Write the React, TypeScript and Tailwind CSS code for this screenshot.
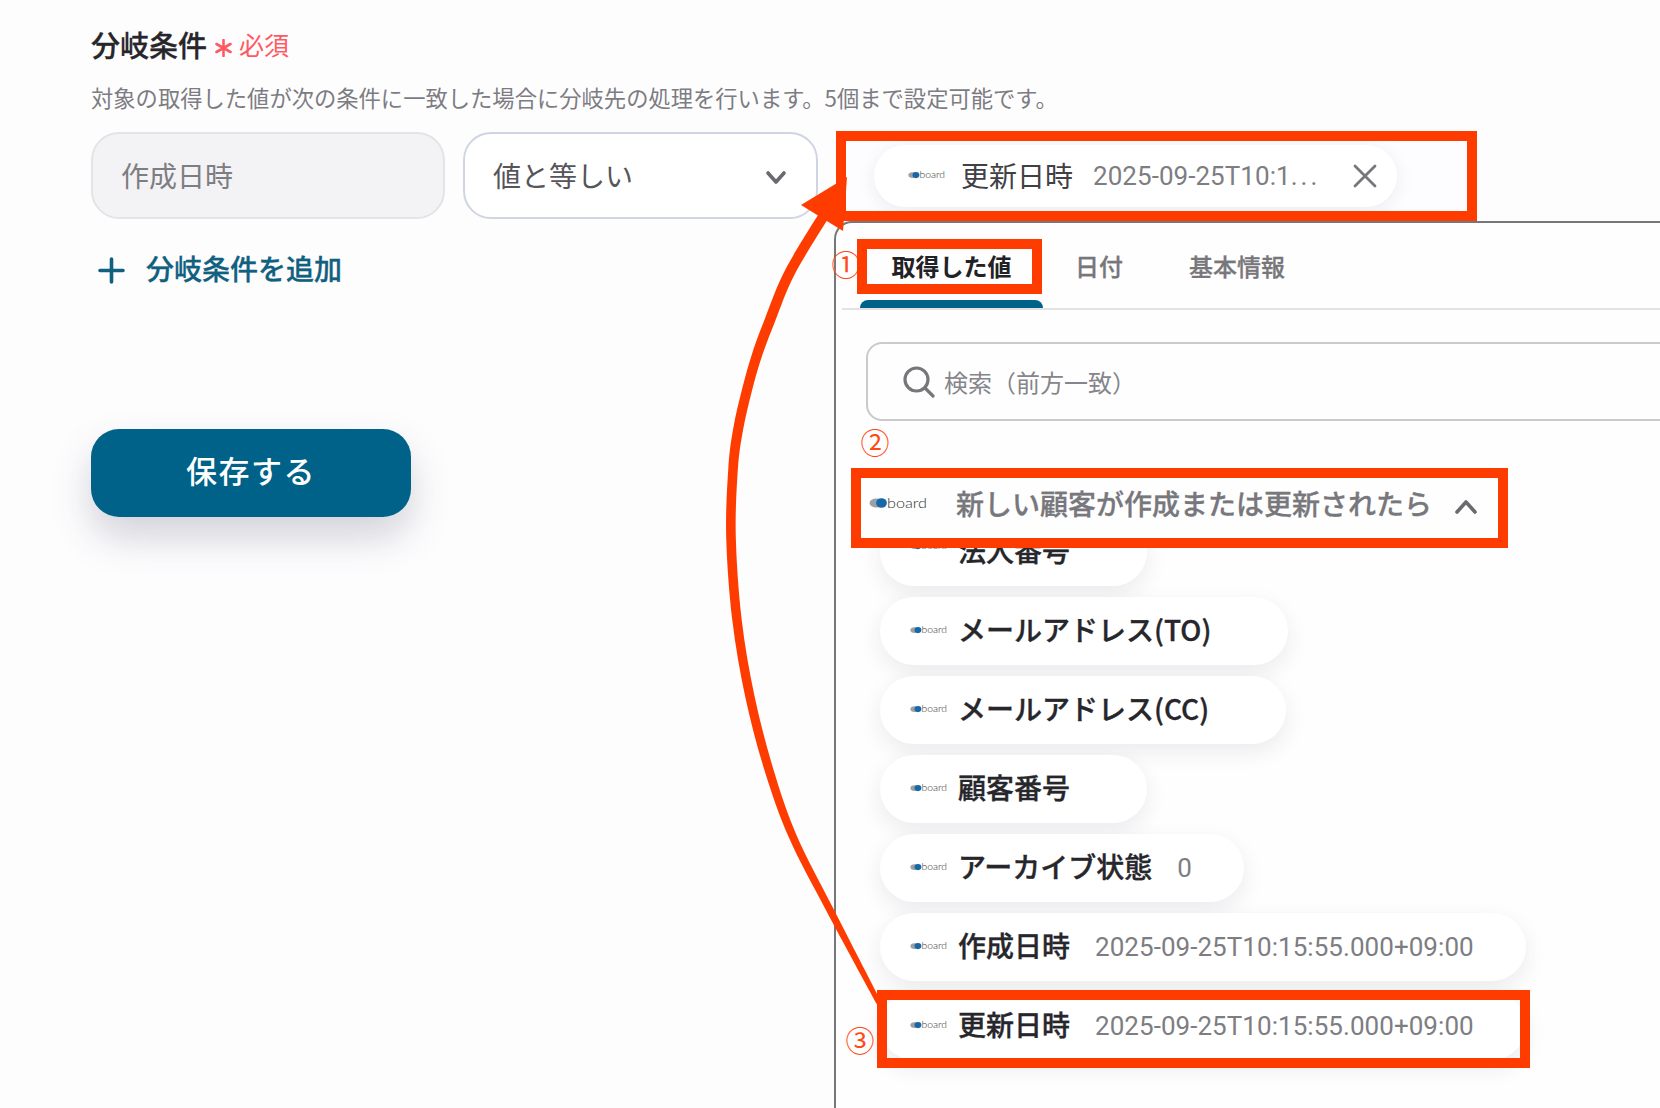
import React from "react";

const ORANGE = "#ff3c00";

function Logo({ w = 37 }: { w?: number }) {
  return (
    <svg width={w} height={(w * 16) / 58} viewBox="0 0 58 16" className="shrink-0">
      <ellipse cx="7.5" cy="8" rx="7" ry="4.6" fill="#9aa0a6" />
      <ellipse cx="12.5" cy="8" rx="5.4" ry="4.8" fill="#1668a8" />
      <text x="18" y="12.5" fontFamily="Lato, sans-serif" fontWeight="300" fontSize="14.5" fill="#333" textLength="40" lengthAdjust="spacingAndGlyphs">
        board
      </text>
    </svg>
  );
}

function Pill({ label, value, clipped }: { label: string; value?: string; clipped?: boolean }) {
  return (
    <div className="flex h-[68px] w-fit shrink-0 items-center rounded-[34px] bg-white pl-[30px] pr-[52px] shadow-[0_8px_22px_rgba(40,40,80,0.09)]">
      <div className={clipped ? "mb-[12px]" : "mb-[2px]"}>
        <Logo />
      </div>
      <span className="ml-[11px] pb-[4px] text-[28px] leading-none font-medium text-[#26262b] [-webkit-text-stroke:0.35px_#26262b]">{label}</span>
      <span className="ml-[25px] font-['Roboto','Noto_Sans',sans-serif] text-[26px] leading-none tracking-[0.05px] text-[#7d7d82]">{value}</span>
    </div>
  );
}

function ArrowCurve() {
  const pts: [number, number, number][] = [
    [879, 1003, 2.5],
    [830, 910, 3.6],
    [793, 837, 4],
    [769, 770, 4.4],
    [750, 697, 4.6],
    [737, 620, 4.7],
    [731, 537, 4.8],
    [733, 470, 4.8],
    [738, 430, 5],
    [747, 390, 5],
    [757, 355, 5.1],
    [770, 320, 5.2],
    [790, 272, 5.2],
    [826, 212, 5.2],
  ];
  const offset = (sign: number) =>
    pts.map((p, i) => {
      const a = pts[Math.max(i - 1, 0)];
      const b = pts[Math.min(i + 1, pts.length - 1)];
      const dx = b[0] - a[0];
      const dy = b[1] - a[1];
      const l = Math.hypot(dx, dy);
      return [p[0] + (sign * p[2] * -dy) / l, p[1] + (sign * p[2] * dx) / l];
    });
  const spline = (q: number[][]) => {
    let d = "";
    for (let i = 0; i < q.length - 1; i++) {
      const p0 = q[Math.max(i - 1, 0)];
      const p1 = q[i];
      const p2 = q[i + 1];
      const p3 = q[Math.min(i + 2, q.length - 1)];
      d += ` C ${p1[0] + (p2[0] - p0[0]) / 6} ${p1[1] + (p2[1] - p0[1]) / 6} ${p2[0] - (p3[0] - p1[0]) / 6} ${p2[1] - (p3[1] - p1[1]) / 6} ${p2[0]} ${p2[1]}`;
    }
    return d;
  };
  const left = offset(1);
  const right = offset(-1).reverse();
  const d = `M ${left[0][0]} ${left[0][1]}${spline(left)} L ${right[0][0]} ${right[0][1]}${spline(right)} Z`;
  return (
    <svg className="pointer-events-none absolute left-0 top-0" width="1660" height="1108" viewBox="0 0 1660 1108">
      <path d={d} fill={ORANGE} />
      <polygon points="801,205 847,177 843,231" fill={ORANGE} />
    </svg>
  );
}

function Tag({ className, children }: { className: string; children: string }) {
  return (
    <span className={`absolute flex items-center justify-center text-[29px] leading-none font-normal text-[#ff4a14] ${className}`}>
      {children}
    </span>
  );
}

export default function App() {
  return (
    <div className="relative h-[1108px] w-[1660px] overflow-hidden bg-[#fefdfe] font-['Noto_Sans_CJK_JP','Noto_Sans',sans-serif]">
      {/* header */}
      <div className="pl-[91px] pt-[26px]">
        <div className="flex h-[40px] items-center pb-[4px]">
          <span className="text-[29px] leading-none font-medium text-[#26262b] [-webkit-text-stroke:0.3px_#26262b]">分岐条件</span>
          <svg width="17" height="18" viewBox="0 0 17 18" className="ml-[8px] mt-[8px]" fill="none" stroke="#ff5a64" strokeWidth="2.6" strokeLinecap="round">
            <path d="M8.5 1 V17 M1.5 5 L15.5 13 M15.5 5 L1.5 13" />
          </svg>
          <span className="ml-[7px] text-[25px] leading-none text-[#ff5a64]">必須</span>
        </div>
        <p className="mt-[15px] mb-[19px] h-[32px] text-[22.3px] leading-[32px] text-[#7c7c82]">
          対象の取得した値が次の条件に一致した場合に分岐先の処理を行います。5個まで設定可能です。
        </p>
        {/* condition fields */}
        <div className="flex h-[87px] gap-[18px]">
          <div className="flex w-[354px] items-center rounded-[28px] border-2 border-[#e4e4e8] bg-[#f3f2f5] pb-[2px] pl-[28px] text-[28px] text-[#7d7d82]">
            作成日時
          </div>
          <div className="flex w-[355px] items-center justify-between rounded-[28px] border-2 border-[#cfd5e3] bg-white pb-[2px] pl-[28px] pr-[28px] text-[28px] text-[#55555a]">
            <span>値と等しい</span>
            <svg width="24" height="18" viewBox="0 0 24 18" className="mt-[6px]" fill="none" stroke="#6a6a6e" strokeWidth="3.6" strokeLinecap="round" strokeLinejoin="round">
              <path d="M4 4 L12 13 L20 4" />
            </svg>
          </div>
          <div className="ml-[1px] flex w-[641px] items-center rounded-[20px] bg-[#fdfcfe] pl-[37px]">
            <div className="flex h-[62px] w-[523px] items-center rounded-[31px] bg-white pl-[34px] pr-[20px] shadow-[0_4px_18px_rgba(40,40,80,0.08)]">
              <Logo />
              <span className="ml-[16px] pb-[2px] text-[28px] leading-none text-[#404045]">更新日時</span>
              <span className="ml-[20px] flex-1 font-['Roboto','Noto_Sans',sans-serif] text-[26px] leading-none tracking-[0.05px] text-[#7d7d82]">
                2025-09-25T10:1<span className="tracking-[3px]">...</span>
              </span>
              <svg width="24" height="24" viewBox="0 0 24 24" fill="none" stroke="#77777b" strokeWidth="2.8" strokeLinecap="round">
                <path d="M2 2 L22 22 M22 2 L2 22" />
              </svg>
            </div>
          </div>
        </div>
      </div>

      {/* lower area */}
      <div className="mt-[2px] flex h-[887px]">
        <div className="w-[834px] shrink-0 pl-[91px]">
          <div className="mt-[29px] flex h-[40px] items-center pl-[7px]">
            <svg width="27" height="27" viewBox="0 0 27 27" fill="none" stroke="#10607f" strokeWidth="3.6" strokeLinecap="round">
              <path d="M13.5 2 V25 M2 13.5 H25" />
            </svg>
            <span className="ml-[21px] pb-[4px] text-[28px] leading-none font-medium text-[#10607f] [-webkit-text-stroke:0.3px_#10607f]">分岐条件を追加</span>
          </div>
          <button className="mt-[139px] flex h-[88px] w-[320px] items-center justify-center rounded-[28px] bg-[#006288] pb-[6px] text-[31px] font-medium tracking-[1.5px] text-white shadow-[0_20px_40px_rgba(30,40,70,0.2)]">
            保存する
          </button>
        </div>

        {/* panel */}
        <div className="flex w-[900px] shrink-0 flex-col rounded-tl-[18px] border-l-2 border-t-2 border-[#77777b] bg-[#fefefe]">
          <div className="ml-[6px] flex h-[87px] shrink-0 items-start border-b-2 border-[#e3e3e7] pl-[18px]">
            <div className="flex w-[183px] flex-col">
              <span className="block pb-[20px] pt-[29px] text-center text-[24px] leading-[28px] font-bold text-[#222226]">取得した値</span>
              <span className="block h-[8px] rounded-t-[8px] bg-[#006288]" />
            </div>
            <span className="ml-[32px] pt-[29px] text-[24px] leading-[28px] font-medium text-[#77777b] [-webkit-text-stroke:0.3px_#77777b]">日付</span>
            <span className="ml-[66px] pt-[29px] text-[24px] leading-[28px] font-medium text-[#77777b] [-webkit-text-stroke:0.3px_#77777b]">基本情報</span>
          </div>

          <div className="ml-[30px] mt-[32px] flex h-[79px] shrink-0 items-center rounded-[16px] border-2 border-[#cacacd] pl-[35px]">
            <svg width="32" height="32" viewBox="0 0 32 32" fill="none" stroke="#77777b" strokeWidth="3.2" strokeLinecap="round">
              <circle cx="13.5" cy="13.5" r="11.5" />
              <path d="M22 22 L30 30" />
            </svg>
            <span className="ml-[9px] text-[24px] leading-none text-[#85858a]">検索（前方一致）</span>
          </div>

          <div className="mt-[57px] flex h-[60px] shrink-0 items-center pb-[11px] pl-[33px]">
            <Logo w={58} />
            <span className="ml-[29px] text-[28px] leading-none font-medium text-[#77777c] [-webkit-text-stroke:0.3px_#77777c]">新しい顧客が作成または更新されたら</span>
            <svg width="24" height="16" viewBox="0 0 24 16" className="ml-[22px] mt-[8px]" fill="none" stroke="#6a6a6e" strokeWidth="3.6" strokeLinecap="round" strokeLinejoin="round">
              <path d="M3 13 L12 3 L21 13" />
            </svg>
          </div>

          <div className="mt-[10px] flex min-h-0 flex-1 flex-col gap-[11px] overflow-hidden pl-[44px] pr-[40px]">
            <div className="mt-[-30px]">
              <Pill label="法人番号" clipped />
            </div>
            <Pill label="メールアドレス(TO)" />
            <Pill label="メールアドレス(CC)" />
            <Pill label="顧客番号" />
            <Pill label="アーカイブ状態" value="0" />
            <Pill label="作成日時" value="2025-09-25T10:15:55.000+09:00" />
            <Pill label="更新日時" value="2025-09-25T10:15:55.000+09:00" />
          </div>
        </div>
      </div>

      {/* annotations */}
      <Tag className="left-[832px] top-[249px] h-[28px] w-[28px]">①</Tag>
      <Tag className="left-[861px] top-[427px] h-[28px] w-[28px]">②</Tag>
      <Tag className="left-[846px] top-[1025px] h-[28px] w-[28px]">③</Tag>

      <div className="absolute left-[836px] top-[131px] h-[90px] w-[641px] border-[10px] border-[#ff3c00]" />
      <div className="absolute left-[857px] top-[239px] h-[55px] w-[185px] border-[10px] border-[#ff3c00]" />
      <div className="absolute left-[851px] top-[468px] h-[80px] w-[657px] border-[10px] border-[#ff3c00]" />
      <div className="absolute left-[877px] top-[990px] h-[78px] w-[653px] border-[10px] border-[#ff3c00]" />

      <ArrowCurve />
    </div>
  );
}
